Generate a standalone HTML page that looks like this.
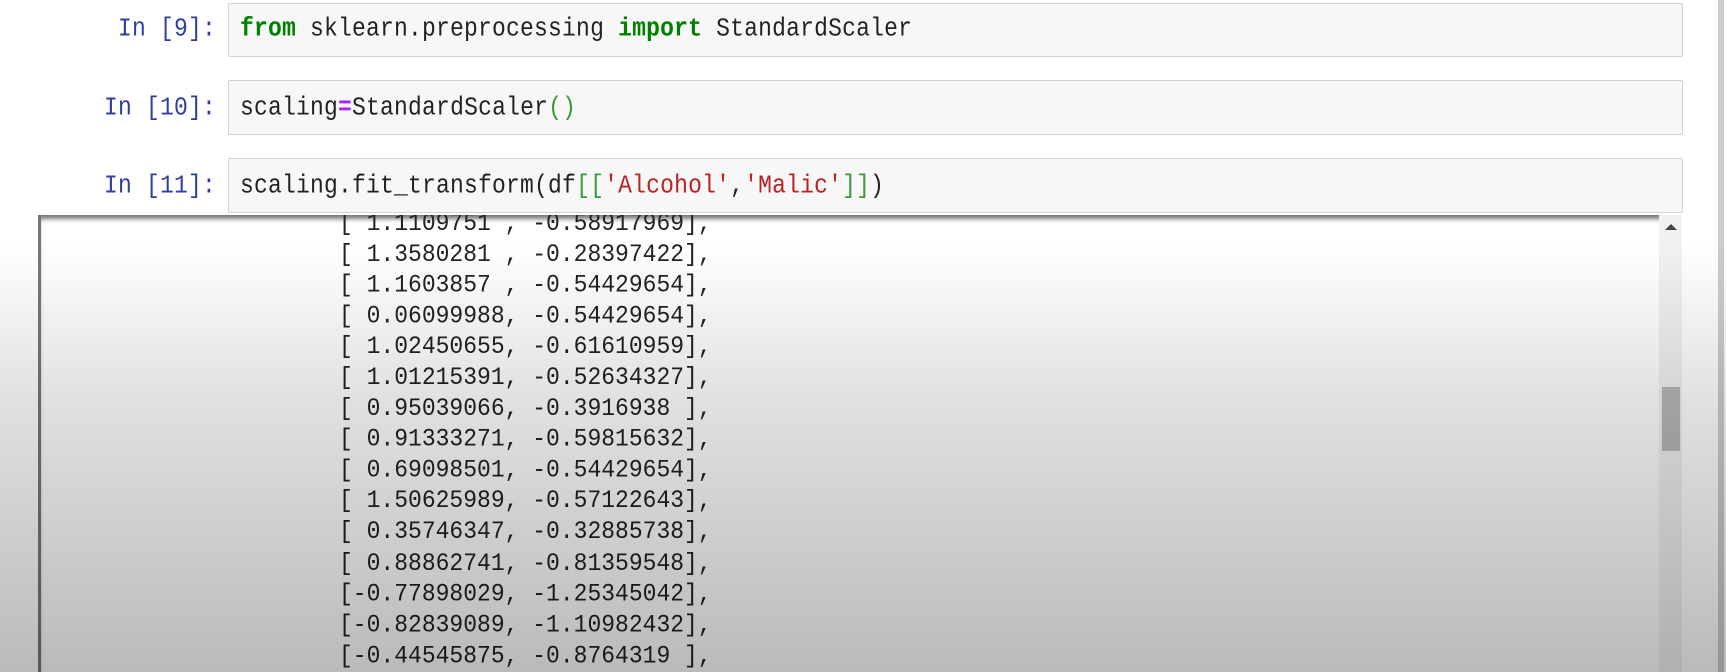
<!DOCTYPE html>
<html><head><meta charset="utf-8"><style>
html,body{margin:0;padding:0;width:1726px;height:672px;overflow:hidden;background:#fff;position:relative;font-family:"Liberation Mono",monospace;}
.cell{position:absolute;left:228px;width:1453px;background:#f7f7f7;border:1px solid #d3d3d3;border-radius:2px;}
.code{position:absolute;left:240px;font-size:23px;color:#222;white-space:pre;line-height:30px;letter-spacing:0.2px;transform:scaleY(1.12);transform-origin:0 50%;}
.pr{position:absolute;right:1510px;font-size:23px;color:#303f9f;white-space:pre;line-height:30px;letter-spacing:0.2px;transform:scaleY(1.12);transform-origin:0 50%;}
.k{color:#008000;font-weight:bold}.o{color:#aa22ff;font-weight:bold}.p{color:#3a9a3a}.s{color:#ba2121}
.out{position:absolute;left:38px;top:215px;width:1621px;height:457px;background:#fff;border-left:3px solid #777;box-shadow:inset 0 6px 5px -2px #777;overflow:hidden;}
.rows{position:absolute;left:298px;top:-7px;font-size:23px;line-height:28.05px;white-space:pre;color:#222;letter-spacing:0px;transform:scaleY(1.1);transform-origin:0 0;}
.sb{position:absolute;left:1659px;top:215px;width:23px;height:457px;background:#f1f1f1;}
.thumb{position:absolute;left:1662px;top:387px;width:18px;height:64px;background:#b8b8b8;}
.arr{position:absolute;left:1665px;top:224px;width:0;height:0;border-left:6px solid transparent;border-right:6px solid transparent;border-bottom:6px solid #444;}
.vl{position:absolute;left:1718px;top:0;width:6px;height:672px;background:#ccc;}
.shade{position:absolute;left:0;top:0;width:1726px;height:672px;background:linear-gradient(to bottom,rgba(0,0,0,0) 0,rgba(0,0,0,0) 36%,rgba(0,0,0,0.12) 60%,rgba(0,0,0,0.27) 100%);pointer-events:none;}
</style></head><body>
<div class="cell" style="top:3px;height:52px"></div>
<div class="cell" style="top:80px;height:53px"></div>
<div class="cell" style="top:158px;height:53px"></div>
<div class="pr" style="top:14px">In [9]:</div>
<div class="code" style="top:14px"><span class="k">from</span> sklearn.preprocessing <span class="k">import</span> StandardScaler</div>
<div class="pr" style="top:93px">In [10]:</div>
<div class="code" style="top:93px">scaling<span class="o">=</span>StandardScaler<span class="p">()</span></div>
<div class="pr" style="top:171px">In [11]:</div>
<div class="code" style="top:171px">scaling.fit_transform(df<span class="p">[[</span><span class="s">'Alcohol'</span>,<span class="s">'Malic'</span><span class="p">]]</span>)</div>
<div class="out"><div class="rows">[ 1.1109751 , -0.58917969],
[ 1.3580281 , -0.28397422],
[ 1.1603857 , -0.54429654],
[ 0.06099988, -0.54429654],
[ 1.02450655, -0.61610959],
[ 1.01215391, -0.52634327],
[ 0.95039066, -0.3916938 ],
[ 0.91333271, -0.59815632],
[ 0.69098501, -0.54429654],
[ 1.50625989, -0.57122643],
[ 0.35746347, -0.32885738],
[ 0.88862741, -0.81359548],
[-0.77898029, -1.25345042],
[-0.82839089, -1.10982432],
[-0.44545875, -0.8764319 ],</div></div>
<div class="sb"></div><div class="thumb"></div><div class="arr"></div>
<div class="vl"></div>
<div class="shade"></div>
</body></html>
